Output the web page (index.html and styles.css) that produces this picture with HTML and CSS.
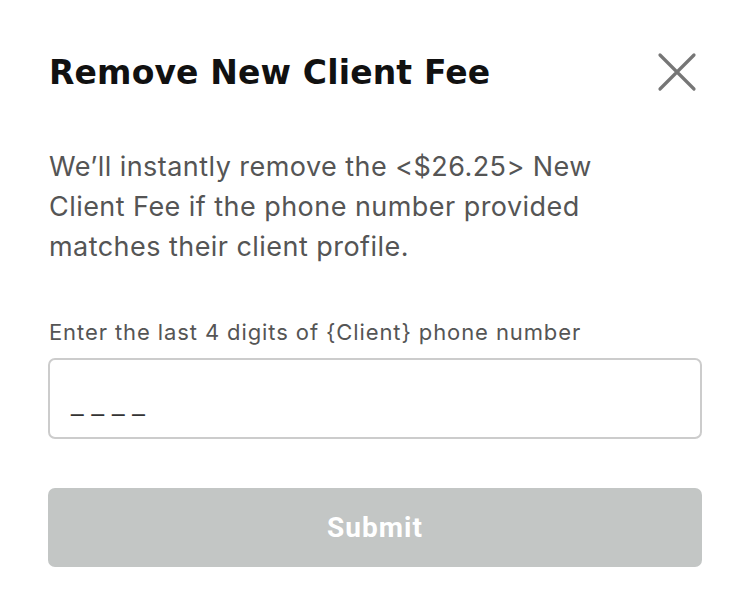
FILE: index.html
```html
<!DOCTYPE html>
<html>
<head>
<meta charset="utf-8">
<link rel="stylesheet" href="styles.css">
</head>
<body>
<div class="modal">
  <div class="header">
    <h1 class="title">Remove New Client Fee</h1>
    <button class="close" aria-label="Close">
      <svg width="40" height="40" viewBox="0 0 40 40"><path d="M3 3 L37 37 M37 3 L3 37" stroke="#767676" stroke-width="3.2" stroke-linecap="round" fill="none"/></svg>
    </button>
  </div>
  <p class="desc">We’ll instantly remove the &lt;$26.25&gt; New Client Fee if the phone number provided matches their client profile.</p>
  <label class="label" for="digits">Enter the last 4 digits of {Client} phone number</label>
  <div class="input"><span class="placeholder">_ _ _ _</span></div>
  <button class="submit">Submit</button>
</div>
</body>
</html>
```
FILE: styles.css
```css
* { box-sizing: border-box; }
html, body { margin: 0; padding: 0; background: #fff; }
.modal { width: 750px; padding: 48px 48px 0 48px; display: flex; flex-direction: column; }
.header { display: flex; justify-content: space-between; align-items: center; height: 48px; }
.title { margin: 0 0 0 1px; font-family: "DejaVu Sans", sans-serif; font-weight: 700; font-size: 33px; color: #111; letter-spacing: 0.15px; }
.close { border: 0; background: none; padding: 0; width: 40px; height: 40px; margin-right: 5px; display: flex; }
.desc { margin: 51px 0 0 1px; width: 610px; font-family: "Inter", "Liberation Sans", sans-serif; font-size: 27px; line-height: 40px; letter-spacing: 0.45px; color: #555; }
.label { margin-top: 51px; margin-left: 1px; font-family: "Inter", sans-serif; font-size: 22px; letter-spacing: 0.9px; color: #555; line-height: 28px; }
.input { margin-top: 12px; height: 81px; border: 2px solid #ccc; border-radius: 7px; padding: 0 20px; display: flex; align-items: flex-end; padding-bottom: 20px; }
.placeholder { font-family: "DejaVu Sans", sans-serif; font-size: 25px; color: #333; line-height: 30px; margin-left: 1px; }
.submit { margin-top: 49px; height: 79px; border: 0; border-radius: 7px; background: #c3c6c5; color: #fff; font-family: "Roboto", sans-serif; font-weight: 700; font-size: 28px; letter-spacing: 1px; }
```
